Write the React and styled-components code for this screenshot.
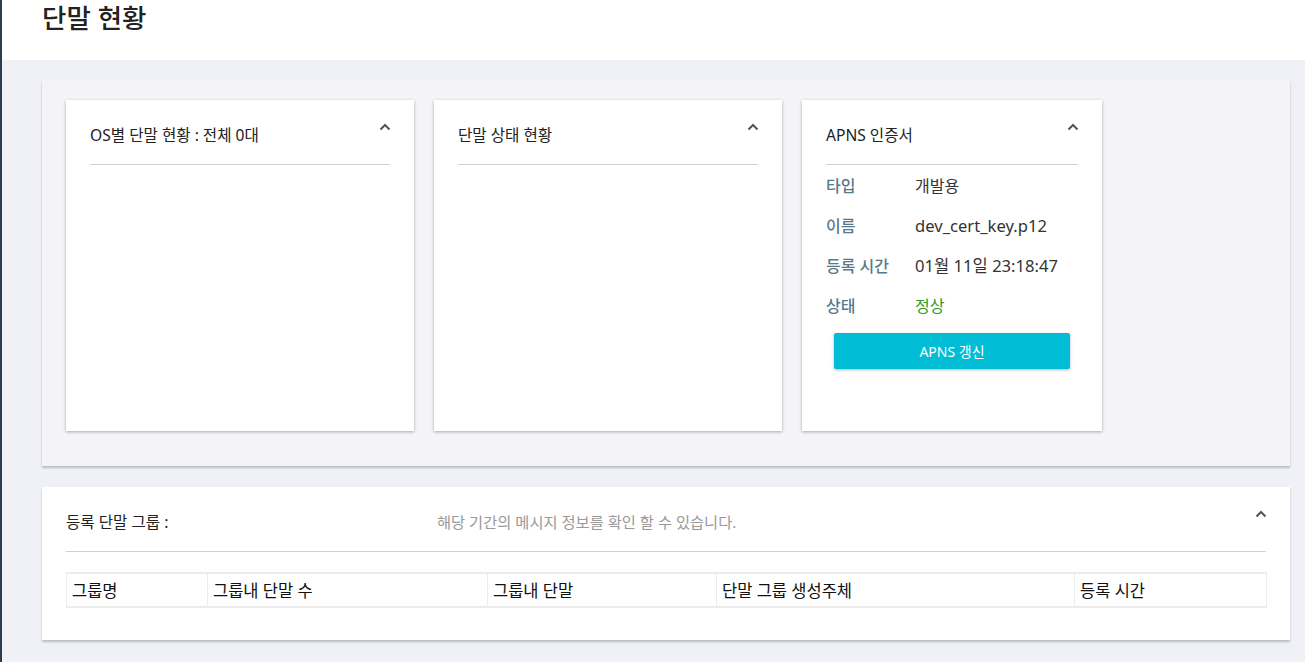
import styled, { createGlobalStyle } from 'styled-components';

const GlobalStyle = createGlobalStyle`
  html, body {
    margin: 0;
    padding: 0;
    background: #f0f1f6;
    font-family: "Noto Sans", "Noto Sans CJK KR", sans-serif;
    color: #222;
  }
  * { box-sizing: border-box; }
`;

const Page = styled.div`
  min-height: 662px;
  border-left: 2px solid #2c3e4c;
  background: #f0f1f6;
`;

const Header = styled.header`
  height: 60px;
  background: #fff;
  padding-left: 40px;
`;

const PageTitle = styled.h1`
  margin: 0;
  font-size: 26.5px;
  font-weight: 500;
  line-height: 36px;
  color: #222;
`;

const Content = styled.main`
  padding: 20px 15px 20px 40px;
  display: flex;
  flex-direction: column;
  gap: 21px;
`;

const Panel = styled.section`
  background: ${({ $tinted }) => ($tinted ? '#f4f4f8' : '#fff')};
  box-shadow: 0 2px 2px rgba(0, 0, 0, 0.22);
  padding: ${({ $tinted }) => ($tinted ? '20px 24px 35px' : '0 24px 32px')};
`;

const CardRow = styled.div`
  display: flex;
  gap: 20px;
`;

const Card = styled.div`
  width: ${({ $w }) => $w}px;
  height: 331px;
  background: #fff;
  box-shadow: 0 1px 3px rgba(0, 0, 0, 0.3);
  padding: 0 24px;
`;

const CardHead = styled.div`
  position: relative;
  height: 65px;
  display: flex;
  align-items: center;
  padding-top: 4px;
  border-bottom: 1px solid #cfcfcf;
`;

const CardTitle = styled.h3`
  margin: 0;
  font-size: 15.6px;
  font-weight: 400;
  color: #222;
`;

const Sub = styled.span`
  font-size: 15.3px;
  color: #999;
`;

const Toggle = styled.button`
  position: absolute;
  right: -2px;
  top: 22px;
  border: 0;
  background: none;
  padding: 0;
  width: 14px;
  height: 10px;
  display: flex;
  align-items: center;
  justify-content: center;
  cursor: pointer;
`;

const InfoRow = styled.div`
  height: 40px;
  display: flex;
  align-items: center;
  font-size: 16px;
`;

const Label = styled.span`
  width: 89px;
  color: #58798b;
  font-weight: 500;
`;

const Value = styled.span`
  font-size: ${({ $num }) => ($num ? '16.6px' : '16px')};
  color: ${({ $ok }) => ($ok ? '#2a9a2a' : '#333')};
`;

const Button = styled.button`
  display: block;
  width: 236px;
  height: 36px;
  margin: 8px 8px 0;
  border: 0;
  border-radius: 2px;
  background: #00bcd4;
  color: #fff;
  font-family: inherit;
  font-size: 14px;
  box-shadow: 0 1px 3px rgba(0, 0, 0, 0.3);
  cursor: pointer;
`;

const GroupTitle = styled(CardTitle)`
  width: 371px;
`;

const Table = styled.table`
  margin-top: 20px;
  width: 100%;
  border-collapse: collapse;
  table-layout: fixed;
`;

const Th = styled.th`
  width: ${({ $w }) => $w}px;
  height: 34px;
  padding: 0 5px;
  text-align: left;
  font-size: 16.5px;
  font-weight: 400;
  color: #111;
  border: 2px solid #ececec;
  border-width: 2px 1px 2px 1px;
`;

const Chevron = () => (
  <svg width="12" height="8" viewBox="0 0 12 8">
    <polyline points="1.5,6.5 6,2 10.5,6.5" fill="none" stroke="#555" strokeWidth="2" />
  </svg>
);

const rows = [
  ['타입', '개발용'],
  ['이름', 'dev_cert_key.p12', false, true],
  ['등록 시간', '01월 11일 23:18:47', false, true],
  ['상태', '정상', true],
];

const cols = [
  ['그룹명', 141],
  ['그룹내 단말 수', 280],
  ['그룹내 단말', 229],
  ['단말 그룹 생성주체', 358],
  ['등록 시간', 192],
];

export default function App() {
  return (
    <>
      <GlobalStyle />
      <Page>
        <Header>
          <PageTitle>단말 현황</PageTitle>
        </Header>
        <Content>
          <Panel $tinted>
            <CardRow>
              <Card $w={348}>
                <CardHead>
                  <CardTitle>OS별 단말 현황 : 전체 0대</CardTitle>
                  <Toggle><Chevron /></Toggle>
                </CardHead>
              </Card>
              <Card $w={348}>
                <CardHead>
                  <CardTitle>단말 상태 현황</CardTitle>
                  <Toggle><Chevron /></Toggle>
                </CardHead>
              </Card>
              <Card $w={300}>
                <CardHead>
                  <CardTitle>APNS 인증서</CardTitle>
                  <Toggle><Chevron /></Toggle>
                </CardHead>
                {rows.map(([k, v, ok, num]) => (
                  <InfoRow key={k}>
                    <Label>{k}</Label>
                    <Value $ok={ok} $num={num}>{v}</Value>
                  </InfoRow>
                ))}
                <Button>APNS 갱신</Button>
              </Card>
            </CardRow>
          </Panel>
          <Panel>
            <CardHead>
              <GroupTitle>등록 단말 그룹 :</GroupTitle>
              <Sub>해당 기간의 메시지 정보를 확인 할 수 있습니다.</Sub>
              <Toggle><Chevron /></Toggle>
            </CardHead>
            <Table>
              <thead>
                <tr>
                  {cols.map(([c, w]) => (
                    <Th key={c} $w={w}>{c}</Th>
                  ))}
                </tr>
              </thead>
            </Table>
          </Panel>
        </Content>
      </Page>
    </>
  );
}
